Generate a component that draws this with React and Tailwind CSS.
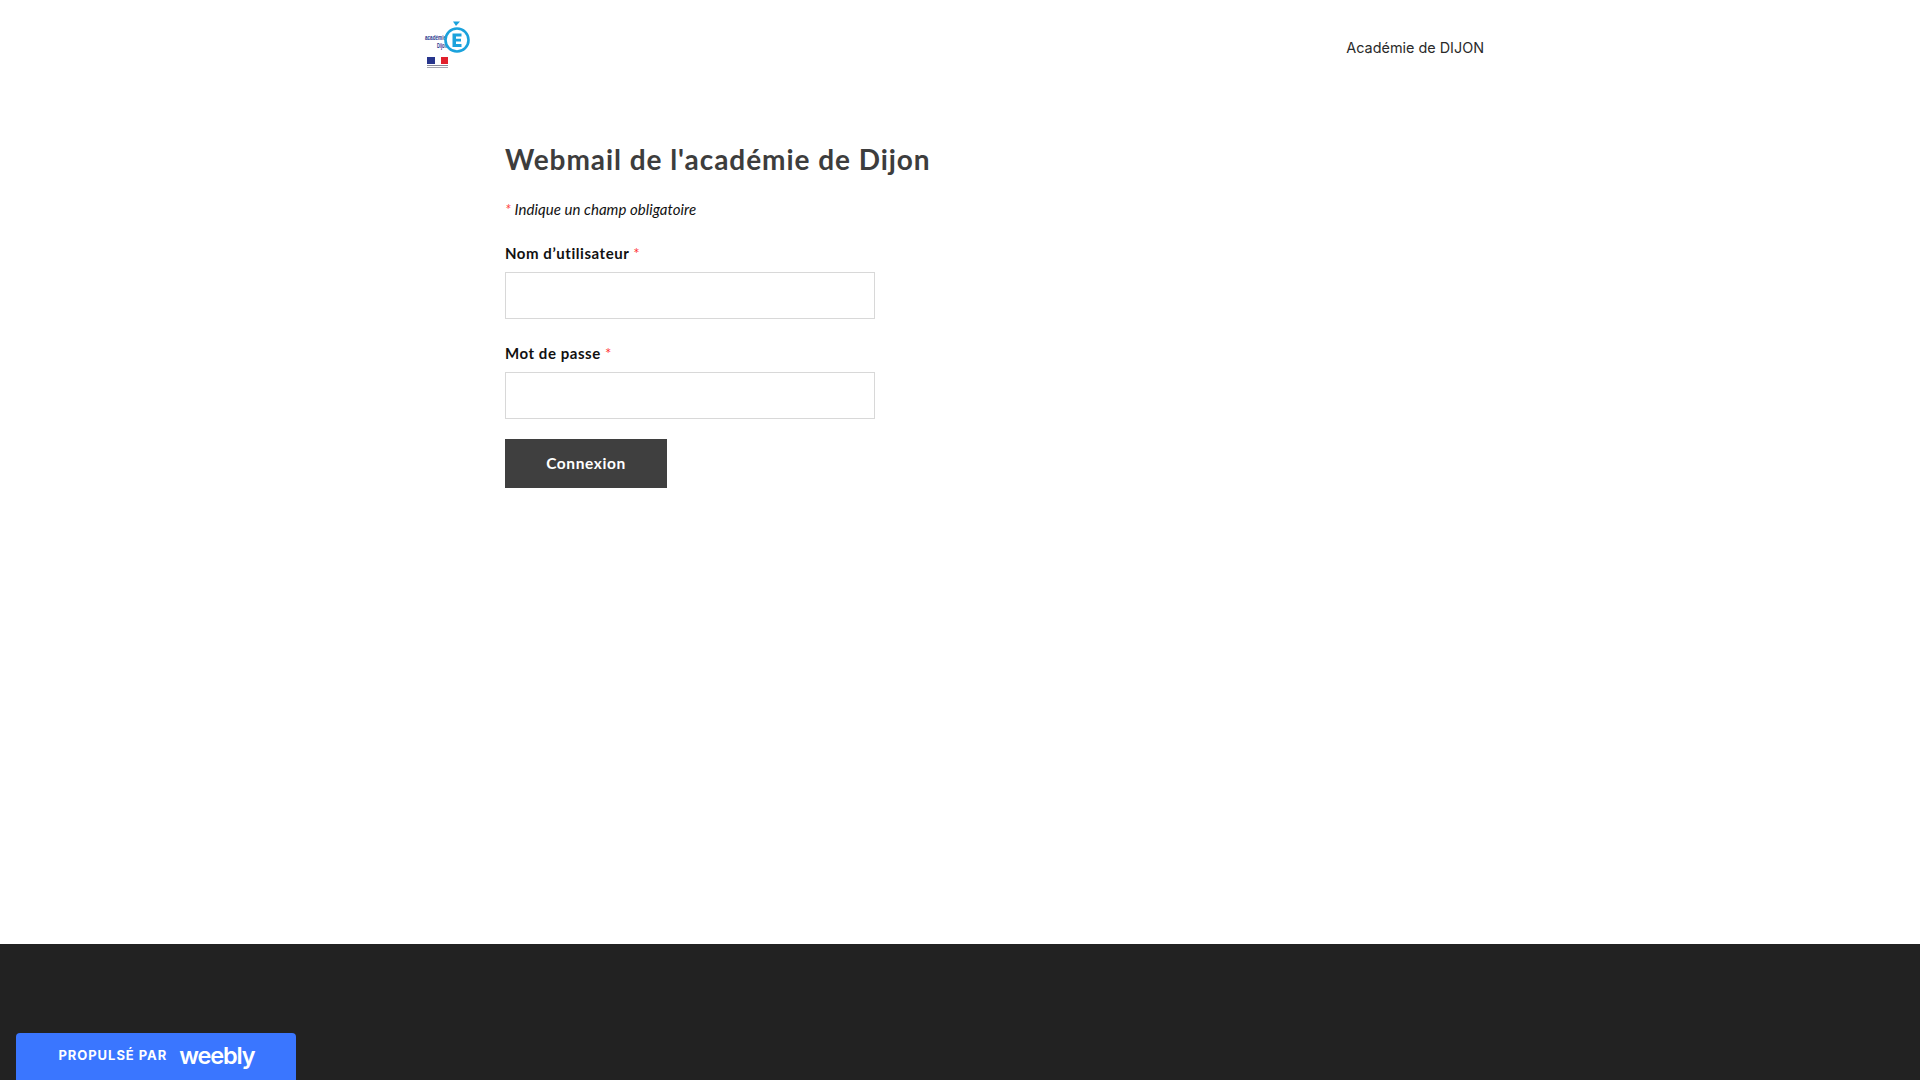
export default function App() {
  const label = "block text-[15px] leading-[20px] font-bold tracking-[0.55px] text-[#111] [font-family:Lato,sans-serif]";
  const input = "block w-[370px] h-[47px] border border-[#d8d8d8] bg-white";
  return (
    <div className="relative flex h-screen flex-col overflow-hidden bg-white [font-family:Lato,sans-serif]">
      <header className="mx-auto flex h-[96px] w-[1100px] shrink-0 items-center justify-between pl-[14px] pr-[26px]">
        <svg width="48" height="50" viewBox="0 0 48 50" className="-mt-[5px] block">
          <text x="1" y="19" fontSize="7.5" fontWeight="700" fill="#27358c" fontFamily="Liberation Sans, sans-serif" textLength="21" lengthAdjust="spacingAndGlyphs">académie</text>
          <text x="13" y="27" fontSize="7.5" fontWeight="700" fill="#27358c" fontFamily="Liberation Sans, sans-serif" textLength="10" lengthAdjust="spacingAndGlyphs">Dijon</text>
          <circle cx="33" cy="19" r="11.5" fill="none" stroke="#1ba2dc" strokeWidth="2.6" />
          <path d="M29 0.5 L36 0.5 L32 5 Z" fill="#1ba2dc" />
          <path d="M28.5 12.5H37.5V15.5H32V17.8H37V20.6H32V23H37.5V26H28.5Z" fill="#1ba2dc" />
          <rect x="3" y="36" width="8" height="7" fill="#27358c" />
          <rect x="11" y="36" width="6" height="7" fill="#fff" />
          <rect x="17" y="36" width="7" height="7" fill="#e1202c" />
          <rect x="3" y="44" width="21" height="1" fill="#8a8a9a" />
          <rect x="3" y="46" width="21" height="1" fill="#a5a5b0" />
        </svg>
        <nav className="text-[14.4px] leading-[20px] text-[#2a2a2a] [font-family:Inter,sans-serif]">Académie de DIJON</nav>
      </header>
      <main className="mx-auto w-[1100px] flex-1 pl-[95px] pt-[51px]">
        <h1 className="text-[28px] leading-[24px] font-bold tracking-[0.95px] text-[#3d3d3d]">Webmail de l'académie de Dijon</h1>
        <p className="mt-[28px] text-[15px] leading-[20px] tracking-[0.05px] italic text-[#111]">
          <span className="text-[#f44]">*</span> Indique un champ obligatoire
        </p>
        <form className="mt-[24px]">
          <label className={label}>Nom d’utilisateur <span className="font-normal text-[#f33]">*</span></label>
          <div className={`mt-[9px] ${input}`} />
          <label className={`mt-[24px] ${label}`}>Mot de passe <span className="font-normal text-[#f33]">*</span></label>
          <div className={`mt-[9px] ${input}`} />
          <button type="button" className="mt-[20px] block h-[49px] w-[162px] bg-[#3f3f3f] text-[15.5px] font-bold tracking-[0.6px] text-white">Connexion</button>
        </form>
      </main>
      <footer className="h-[136px] shrink-0 bg-[#222222]" />
      <div className="absolute bottom-0 left-[16px] flex h-[47px] w-[280px] items-center justify-center gap-[12px] rounded-t-[4px] bg-[#3a76ff] pb-[1px] pl-[1px] text-white">
        <span className="text-[13px] font-bold tracking-[0.95px] [font-family:Inter,sans-serif]">PROPULSÉ PAR</span>
        <span className="text-[23.5px] leading-none font-semibold tracking-[-1.1px] [font-family:Inter,sans-serif]">weebly</span>
      </div>
    </div>
  );
}
